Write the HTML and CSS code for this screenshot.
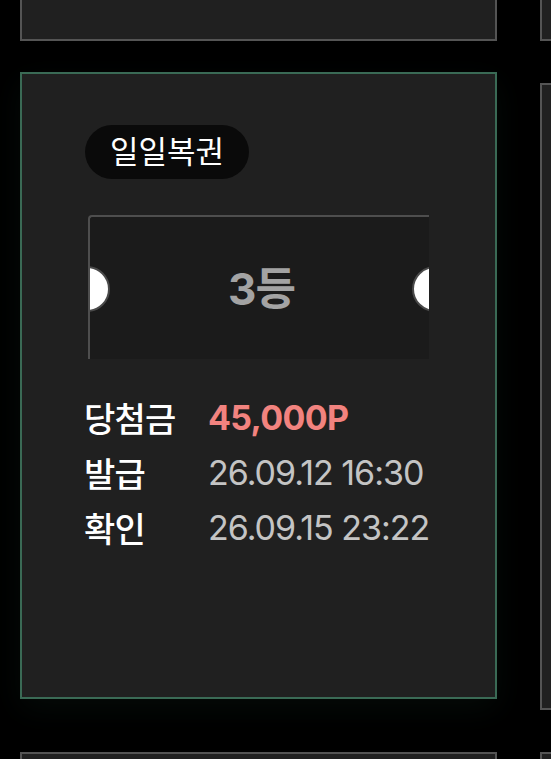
FILE: index.html
```html
<!DOCTYPE html>
<html lang="ko">
<head>
<meta charset="utf-8">
<title>복권 내역</title>
<link rel="stylesheet" href="styles.css">
</head>
<body>
<main class="grid">
  <article class="card"></article>
  <article class="card"></article>
  <article class="card card--active">
    <span class="badge">일일복권</span>
    <div class="ticket">
      <span class="notch notch--left"></span>
      <span class="rank">3등</span>
      <span class="notch notch--right"></span>
    </div>
    <dl class="info">
      <div class="row"><dt>당첨금</dt><dd class="prize">45,000P</dd></div>
      <div class="row"><dt>발급</dt><dd>26.09.12 16:30</dd></div>
      <div class="row"><dt>확인</dt><dd>26.09.15 23:22</dd></div>
    </dl>
  </article>
  <article class="card"></article>
  <article class="card"></article>
  <article class="card"></article>
</main>
</body>
</html>
```

FILE: styles.css
```css
* { box-sizing: border-box; }
html, body {
  margin: 0;
  padding: 0;
  background: #000;
  overflow: hidden;
  font-family: Inter, "Noto Sans CJK KR", sans-serif;
}
.grid {
  display: grid;
  grid-template-columns: 477px 477px;
  grid-auto-rows: 627px;
  gap: 42px 43px;
  margin-top: -586px;
  padding-left: 20px;
}
.card {
  background: #202020;
  border: 2px solid #545454;
  padding: 51px 0 0 62px;
}
.card--active {
  border-color: #3a6a55;
  transform: translateY(-11px);
  box-shadow: 0 10px 30px rgba(30, 60, 45, 0.18);
}
.badge {
  display: inline-block;
  margin-left: 1px;
  height: 54px;
  line-height: 54px;
  padding: 0 25px;
  border-radius: 27px;
  background: #0a0a0a;
  color: #fff;
  font-size: 31px;
  font-weight: 400;
  letter-spacing: 0;
}
.ticket {
  position: relative;
  overflow: hidden;
  margin: 36px 0 0 4px;
  width: 341px;
  height: 144px;
  background: #1b1b1b;
  border-top: 2px solid #4e4e4e;
  border-left: 2px solid #4e4e4e;
  border-top-left-radius: 4px;
  display: flex;
  align-items: center;
  justify-content: center;
}
.rank {
  color: #a3a3a3;
  font-size: 44px;
  font-weight: 700;
  letter-spacing: -1px;
  margin: 0 0 5px 4px;
}
.notch {
  position: absolute;
  top: 49px;
  width: 46px;
  height: 46px;
  border-radius: 50%;
  background: #fff;
  border: 2px solid #4a4a4a;
}
.notch--left { left: -26px; }
.notch--right { right: -29px; }
.info {
  margin: 31px 0 0;
  padding: 0;
}
.row {
  display: flex;
  height: 55px;
  align-items: center;
}
.row dt {
  width: 124px;
  color: #fff;
  font-size: 34px;
  font-weight: 500;
  letter-spacing: -0.8px;
}
.row dd {
  margin: 0;
  color: #c4c4c4;
  font-size: 34px;
  letter-spacing: -1px;
}
.row dd.prize {
  color: #f2837f;
  font-weight: 700;
  letter-spacing: -0.7px;
}
```
